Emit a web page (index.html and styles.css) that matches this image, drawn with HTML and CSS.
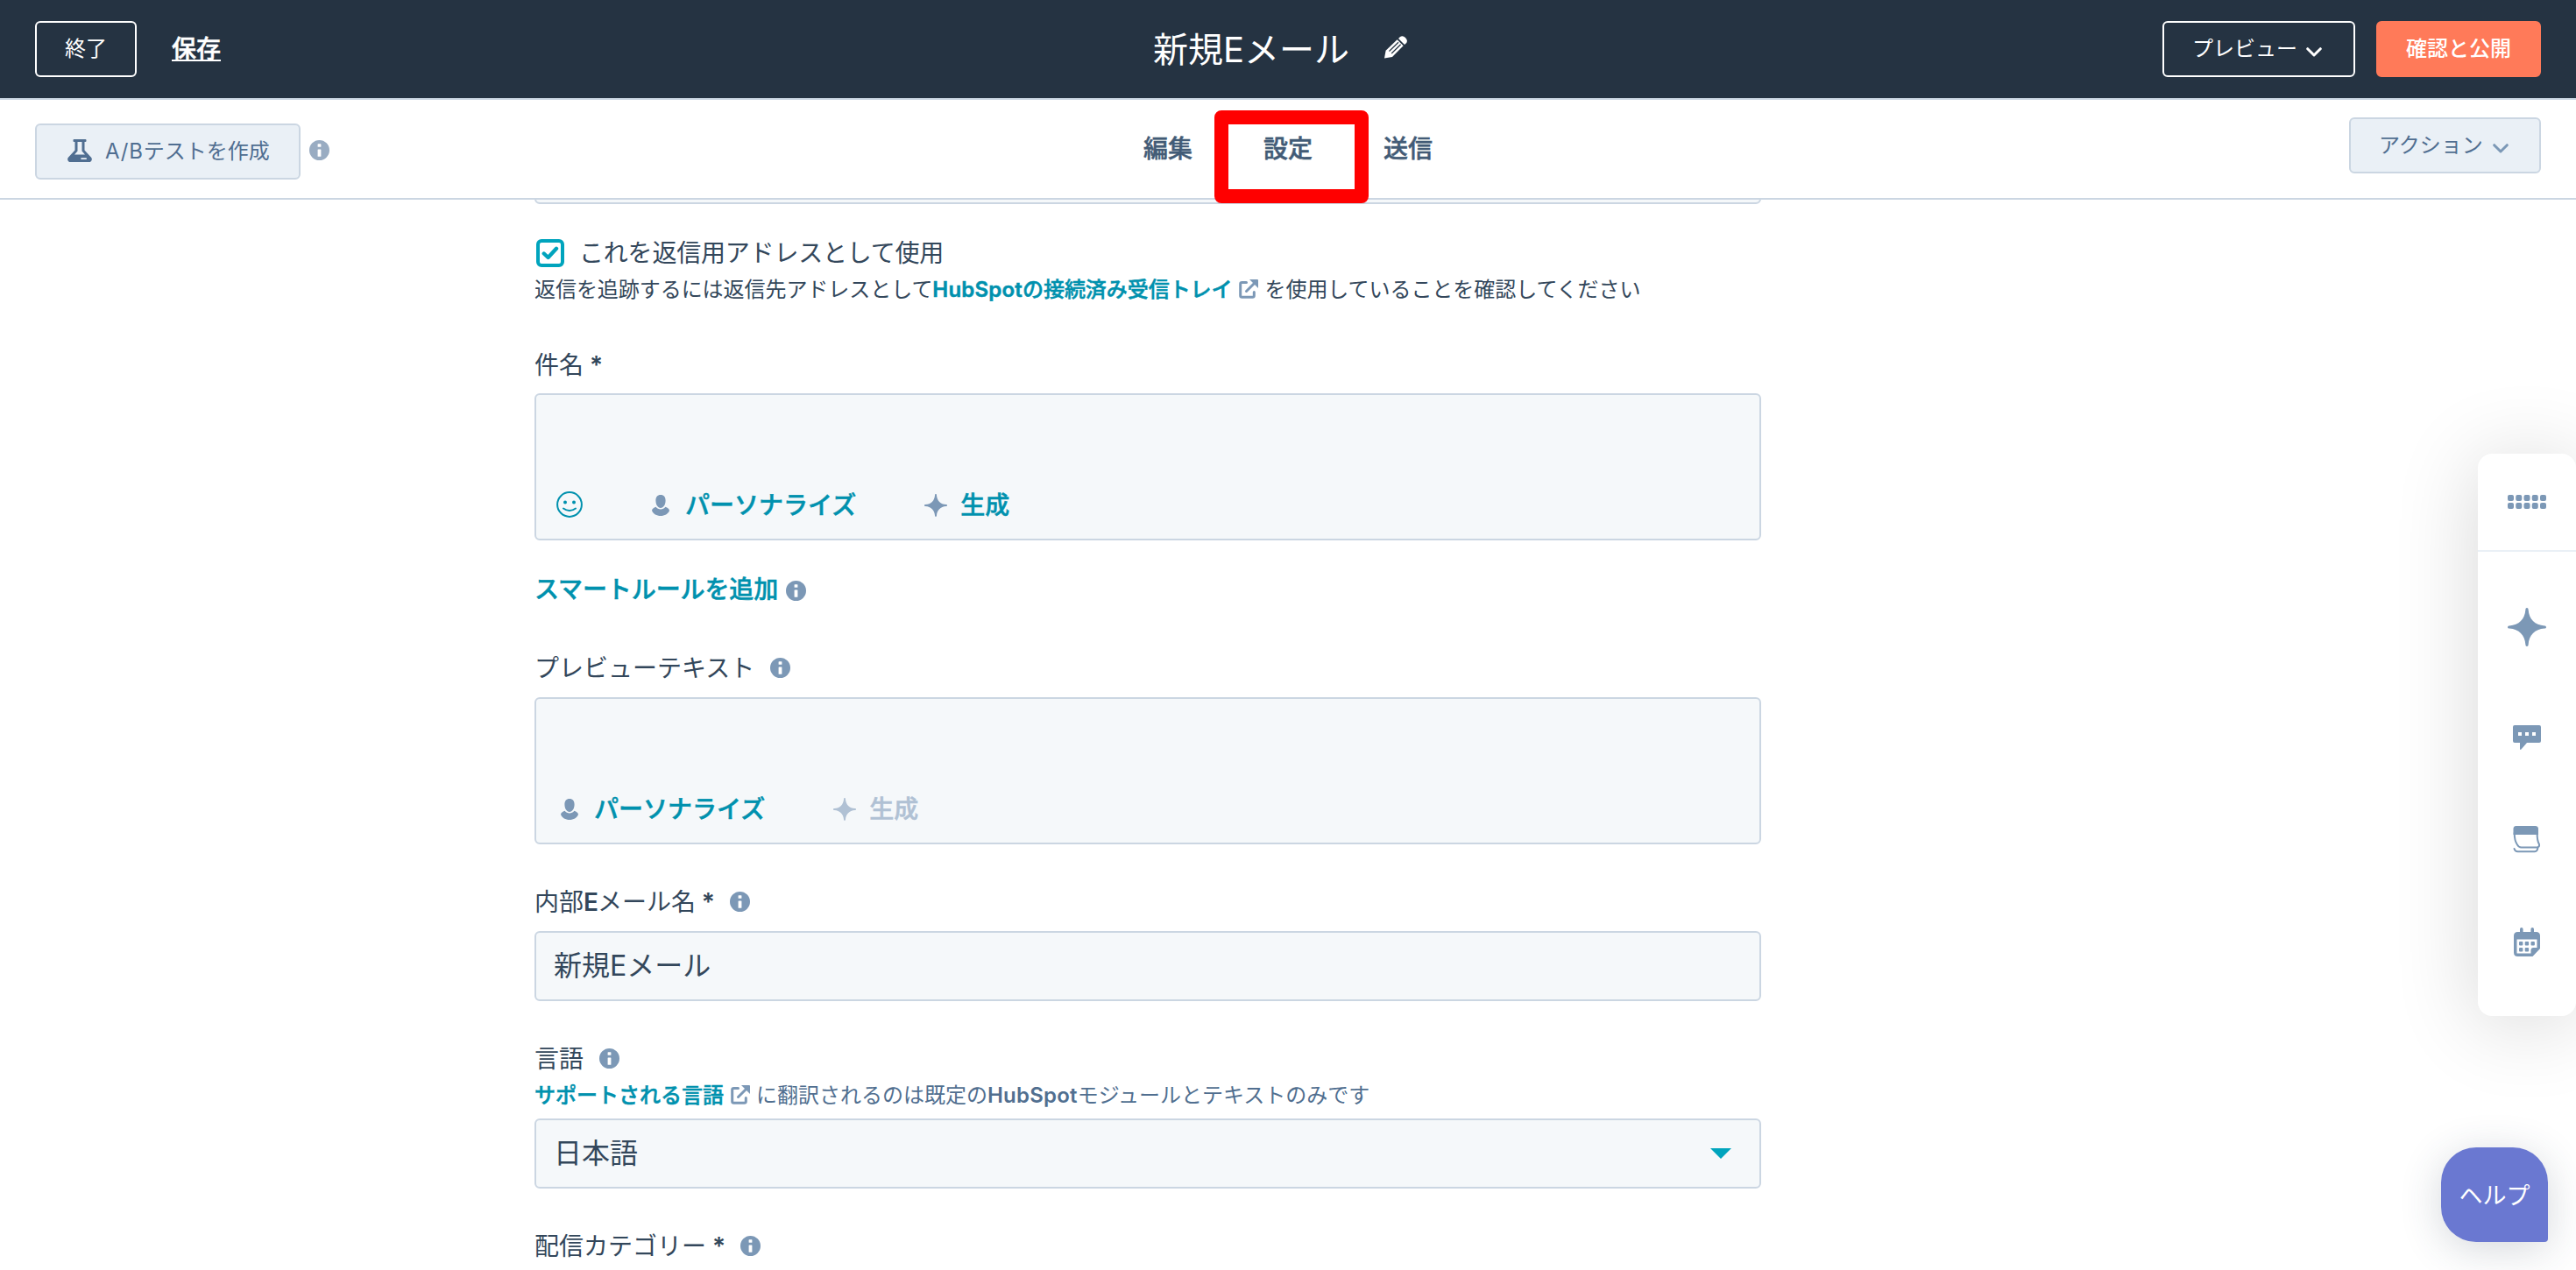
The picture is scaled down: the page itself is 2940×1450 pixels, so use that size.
FILE: index.html
```html
<!DOCTYPE html>
<html lang="ja">
<head>
    <meta charset="UTF-8">
    <title>新規Eメール</title>
    <link rel="stylesheet" href="styles.css">
</head>
<body>
<!-- icons -->
<svg class="sprite">
    <symbol id="info" viewBox="0 0 24 24">
        <path fill="currentColor" fill-rule="evenodd" d="M12 0a12 12 0 1 0 0 24a12 12 0 1 0 0-24zM10.600 4.400h2.800q.6 0 .6.600v2.600q0 .6-.6.600h-2.800q-.6 0-.6-.6V5q0-.6.600-.6zM10.600 11h2.800q.6 0 .6.600v7.400q0 .6-.6.600h-2.800q-.6 0-.6-.6v-7.400q0-.6.600-.6z"/>
    </symbol>
    <symbol id="external" viewBox="0 0 22 22">
        <path fill="none" stroke="currentColor" stroke-width="3" stroke-linecap="round" stroke-linejoin="round" d="M8.500 3.500H3.500Q1.700 3.500 1.700 5.300V18.500Q1.700 20.300 3.500 20.300H15.500Q17.300 20.300 17.300 18.500V14.500M8.500 13.500L17 5"/>
        <path fill="currentColor" d="M12 0h9q1 0 1 1v9l-3-3-4-4z"/>
    </symbol>
    <symbol id="person" viewBox="0 0 20 24">
        <path fill="currentColor" d="M10 0c3.600 0 5.800 2.600 5.600 6.800C15.400 11.500 13.200 15 10 15S4.600 11.500 4.400 6.800C4.200 2.600 6.400 0 10 0zM4.600 13.800C6 15.600 7.800 16.500 10 16.500s4-.9 5.400-2.700c2.600.8 4.400 2.200 4.600 4.200C18.600 21.800 14.500 24 10 24S1.400 21.800 0 18c.2-2 2-3.400 4.600-4.200z"/>
    </symbol>
    <symbol id="sparkle" viewBox="0 0 44 44">
        <path fill="currentColor" d="M22 0c1 0 1.600.8 1.600 2C24.400 13 31 19.600 42 20.400c1.200 0 2 .6 2 1.600s-.8 1.600-2 1.600C31 24.400 24.400 31 23.600 42c0 1.200-.6 2-1.600 2s-1.600-.8-1.600-2C19.600 31 13 24.400 2 23.600c-1.200 0-2-.6-2-1.600s.8-1.600 2-1.600C13 19.600 19.600 13 20.400 2c0-1.200.6-2 1.600-2z"/>
    </symbol>
    <symbol id="chevron" viewBox="0 0 18 11">
        <path fill="none" stroke="currentColor" stroke-width="3" stroke-linecap="round" stroke-linejoin="round" d="M1.700 1.700L9 9l7.300-7.300"/>
    </symbol>
</svg>

<header class="header">
    <div class="header-left">
        <a class="btn btn-outline" href="javascript:;">終了</a>
        <a class="save" href="javascript:;">保存</a>
    </div>
    <div class="title">
        <h1>新規Eメール</h1>
        <svg class="pencil" viewBox="0 0 26 26">
            <path fill="#fff" d="M0 25.500L1.600 16.800 14.600 4.200 21.600 11.200 9 24z"/>
            <path fill="#fff" d="M16 3l2-2q3-2 6 1t1.200 6l-2.200 2z"/>
            <path stroke="#253342" stroke-width="1.200" d="M5.500 17.500L16 7.200M8.200 20L18.600 9.800"/>
        </svg>
    </div>
    <div class="header-right">
        <a class="btn btn-outline preview" href="javascript:;">プレビュー<svg class="chevron"><use href="#chevron"/></svg></a>
        <a class="btn btn-primary" href="javascript:;">確認と公開</a>
    </div>
</header>

<nav class="subheader">
    <div class="sub-left">
        <a class="btn btn-light" href="javascript:;">
            <svg class="flask" viewBox="0 0 28 26">
                <path fill="currentColor" fill-rule="evenodd" d="M7.500 0h13q1 0 1 1v1q0 1-1 1h-1v9.500l7.800 8.500q1.600 3-1.300 5H2Q-.9 24 .7 21l7.800-8.500V3h-1q-1 0-1-1V1q0-1 1-1zM11.500 3v10.500L8 17.500h12l-3.500-4V3zM16 21.200q-.8 0-.8.900t.8.900h5.200q.8 0 .8-.9t-.8-.9z"/>
            </svg><span class="ab">A/B</span>テストを作成</a>
        <svg class="info info-pale"><use href="#info"/></svg>
    </div>
    <div class="tabs">
        <a href="javascript:;">編集</a>
        <a class="on" href="javascript:;">設定</a>
        <a href="javascript:;">送信</a>
    </div>
    <a class="btn btn-light action" href="javascript:;">アクション<svg class="chevron"><use href="#chevron"/></svg></a>
</nav>

<main class="main">
    <div class="form">
        <div class="field field-cut"></div>
        <div class="check">
            <span class="checkbox"><svg viewBox="0 0 20 16"><path fill="none" stroke="currentColor" stroke-width="4.400" stroke-linecap="round" stroke-linejoin="round" d="M2.800 8.500L7.600 13 17 2.800"/></svg></span>
            これを返信用アドレスとして使用
        </div>
        <p class="help help-reply">返信を追跡するには返信先アドレスとして<a href="javascript:;"><b>HubSpot</b>の接続済み受信トレイ</a><svg class="external"><use href="#external"/></svg>を使用していることを確認してください</p>

        <div class="label label-subject">件名 <b>*</b></div>
        <div class="field area">
            <svg class="smile" viewBox="0 0 30 30">
                <circle cx="15" cy="15" r="13.900" fill="none" stroke="currentColor" stroke-width="2"/>
                <circle cx="10" cy="12.500" r="2" fill="currentColor"/>
                <circle cx="20" cy="12.500" r="2" fill="currentColor"/>
                <path fill="none" stroke="currentColor" stroke-width="2" stroke-linecap="round" d="M8 19.500q7 5 14 0"/>
            </svg>
            <a class="tool" href="javascript:;"><svg class="person"><use href="#person"/></svg>パーソナライズ</a>
            <a class="tool" href="javascript:;"><svg class="spark"><use href="#sparkle"/></svg>生成</a>
        </div>
        <div class="smart"><a href="javascript:;">スマートルールを追加</a><svg class="info"><use href="#info"/></svg></div>

        <div class="label label-preview">プレビューテキスト<svg class="info"><use href="#info"/></svg></div>
        <div class="field area">
            <a class="tool" href="javascript:;"><svg class="person"><use href="#person"/></svg>パーソナライズ</a>
            <a class="tool disabled" href="javascript:;"><svg class="spark"><use href="#sparkle"/></svg>生成</a>
        </div>

        <div class="label">内部<b>E</b>メール名 <b>*</b><svg class="info"><use href="#info"/></svg></div>
        <div class="field">新規Eメール</div>

        <div class="label label-lang">言語<svg class="info"><use href="#info"/></svg></div>
        <p class="help help-lang"><a href="javascript:;">サポートされる言語</a><svg class="external"><use href="#external"/></svg>に翻訳されるのは既定の<b>HubSpot</b>モジュールとテキストのみです</p>
        <div class="field select">日本語<span class="caret"></span></div>

        <div class="label">配信カテゴリー <b>*</b><svg class="info"><use href="#info"/></svg></div>
    </div>
</main>

<aside class="side">
    <div class="side-top">
        <svg width="44" height="16" viewBox="0 0 44 16">
            <g fill="currentColor">
                <rect x="0" y="0" width="7" height="7" rx="2"/><rect x="9.250" y="0" width="7" height="7" rx="2"/><rect x="18.500" y="0" width="7" height="7" rx="2"/><rect x="27.750" y="0" width="7" height="7" rx="2"/><rect x="37" y="0" width="7" height="7" rx="2"/>
                <rect x="0" y="9" width="7" height="7" rx="2"/><rect x="9.250" y="9" width="7" height="7" rx="2"/><rect x="18.500" y="9" width="7" height="7" rx="2"/><rect x="27.750" y="9" width="7" height="7" rx="2"/><rect x="37" y="9" width="7" height="7" rx="2"/>
            </g>
        </svg>
    </div>
    <div class="side-list">
        <svg width="44" height="44"><use href="#sparkle"/></svg>
        <svg width="32" height="28" viewBox="0 0 32 28">
            <path fill="currentColor" fill-rule="evenodd" d="M2 0h28q2 0 2 2v16q0 2-2 2H16l-6.500 7.500q-1.500 1-1.500-.5v-7H2q-2 0-2-2V2q0-2 2-2zM6 8v4h4V8zM14 8v4h4V8zM22 8v4h4V8z"/>
        </svg>
        <svg width="32" height="31" viewBox="0 0 32 31">
            <path fill="currentColor" d="M3.500 0h22Q29 0 29 3.500V10H.5V3.500Q.5 0 3.500 0z"/>
            <path fill="none" stroke="currentColor" stroke-width="2" stroke-linejoin="round" stroke-linecap="round" d="M1.700 8c0 6 .8 10 3.300 13.500Q6.800 24.500 9.500 24.500H28Q30.500 24 30 21C28 17.500 27.500 14 27.700 8M1.500 26q1 3.200 4 3.200H25q3 0 3.500-4.500"/>
        </svg>
        <svg width="30" height="33" viewBox="0 0 30 33">
            <path fill="currentColor" fill-rule="evenodd" d="M7 5V2q0-2 1.800-2t1.800 2v3h8.800V2q0-2 1.800-2T23 2v3h2.500Q30 5 30 9.500V24l-8.500 9h-17Q0 33 0 28.500v-19Q0 5 4.500 5zM3.500 13.500V29.500H19.500V26q0-3 3-3h4v-9.500z"/>
            <g fill="currentColor">
                <rect x="6" y="16" width="4.400" height="4.400" rx="1"/><rect x="12.700" y="16" width="4.400" height="4.400" rx="1"/><rect x="19.500" y="16" width="4.400" height="4.400" rx="1"/>
                <rect x="6" y="23" width="4.400" height="4.400" rx="1"/><rect x="12.700" y="23" width="4.400" height="4.400" rx="1"/>
            </g>
        </svg>
    </div>
</aside>

<a class="help-btn" href="javascript:;">ヘルプ</a>
</body>
</html>
```
FILE: styles.css
```css
*{
    margin: 0;
    padding: 0;
    box-sizing: border-box;
}
body{
    height: 1450px;
    overflow: hidden;
    background: #fff;
    color: #33475b;
    font-family: Inter, "Noto Sans CJK JP", sans-serif;
    font-size: 28px;
    line-height: 40px;
}
a{
    color: #0091ae;
    text-decoration: none;
}
svg{
    flex: none;
}
.sprite{
    display: none;
}

/* header */
.header{
    height: 114px;
    padding: 24px 40px 0;
    display: grid;
    grid-template-columns: 1fr auto 1fr;
    align-items: start;
    background: #253342;
    border-bottom: 2px solid #cbd6e2;
}
.header-left,
.header-right{
    display: flex;
    align-items: center;
}
.header-right{
    justify-content: flex-end;
    gap: 24px;
}
.btn{
    height: 64px;
    padding: 0 32px;
    display: flex;
    align-items: center;
    border: 2px solid;
    border-radius: 6px;
    font-size: 24px;
    white-space: nowrap;
}
.btn-outline{
    color: #fff;
    border-color: #fff;
}
.preview{
    width: 220px;
}
.btn-primary{
    color: #fff;
    font-weight: 500;
    background: #ff7a59;
    border-color: #ff7a59;
}
.btn-light{
    color: #506e91;
    background: #eaf0f6;
    border-color: #cbd6e2;
}
.chevron{
    width: 18px;
    height: 11px;
    margin: 6px 0 0 11px;
}
.preview .chevron{
    margin-left: 10px;
}
.save{
    margin-left: 40px;
    color: #fff;
    font-weight: 500;
    -webkit-text-stroke: 0.5px;
    text-decoration: underline;
    text-decoration-thickness: 2px;
    text-underline-offset: 2px;
}
.title{
    height: 64px;
    padding: 1px 18px 0 0;
    display: flex;
    align-items: center;
    color: #fff;
}
.title h1{
    font-size: 40px;
    font-weight: 400;
}
.pencil{
    width: 26px;
    height: 26px;
    margin: -6px 0 0 40px;
}

/* sub header */
.subheader{
    height: 114px;
    padding: 0 40px;
    display: grid;
    grid-template-columns: 1fr auto 1fr;
    border-bottom: 2px solid #cbd6e2;
}
.sub-left{
    padding-top: 27px;
    display: flex;
    align-items: flex-start;
}
.sub-left .btn{
    width: 303px;
    padding-left: 35px;
}
.ab{
    letter-spacing: 0.8px;
}
.flask{
    width: 28px;
    height: 26px;
    margin: -3px 15px 0 0;
}
.info{
    width: 23px;
    height: 23px;
    color: #7c98b6;
}
.info-pale{
    margin: 19px 0 0 10px;
    color: #99acc2;
}
.tabs{
    padding-top: 36px;
    display: flex;
    gap: 81px;
}
.tabs a{
    color: #425b76;
    font-weight: 500;
    -webkit-text-stroke: 0.5px;
    position: relative;
}
.tabs .on::after{
    content: "";
    position: absolute;
    left: -56px;
    top: -24px;
    width: 176px;
    height: 106px;
    box-sizing: border-box;
    border: 16px solid #f00;
    border-radius: 8px;
    z-index: 5;
}
.action{
    width: 219px;
    margin-top: 20px;
    justify-self: end;
}
.action .chevron{
    color: #7c98b6;
}

/* form */
.main{
    height: 1222px;
    overflow: hidden;
}
.form{
    width: 1400px;
    margin-left: 610px;
}
.field{
    height: 80px;
    padding: 0 20px;
    display: flex;
    align-items: center;
    background: #f5f8fa;
    border: 2px solid #cbd6e2;
    border-radius: 6px;
    font-size: 32px;
}
.field-cut{
    margin-top: -75px;
}
.check{
    height: 32px;
    margin: 40px 0 10px 2px;
    display: flex;
    align-items: center;
    letter-spacing: -0.2px;
}
.checkbox{
    width: 32px;
    height: 32px;
    margin-right: 17px;
    display: flex;
    align-items: center;
    justify-content: center;
    color: #00a4bd;
    border: 4px solid #00a4bd;
    border-radius: 6px;
}
.checkbox svg{
    width: 20px;
    height: 16px;
}
.help{
    height: 32px;
    font-size: 24px;
    line-height: 32px;
    white-space: nowrap;
}
.help a{
    font-weight: 500;
    -webkit-text-stroke: 0.5px;
}
.help b{
    font-weight: 600;
    letter-spacing: 0.2px;
}
.help-reply{
    letter-spacing: -0.05px;
}
.external{
    width: 22px;
    height: 22px;
    margin: 0 7px 0 8px;
    color: #7c98b6;
    vertical-align: -2px;
}
.label{
    height: 40px;
    margin: 46px 0 13px;
    display: flex;
    align-items: center;
    white-space: pre;
}
.label b{
    font-weight: 600;
    letter-spacing: -1px;
}
.label b:nth-last-of-type(1){
    margin-left: -1px;
}
.label .info{
    margin: -2px 0 0 18px;
}
.label-subject{
    margin: 50px 0 12px;
}
.label-preview{
    margin-top: 50px;
}
.label-lang{
    margin-bottom: 6px;
}
.help-lang{
    margin-bottom: 10px;
    color: #516f90;
}
.area{
    height: 168px;
    padding: 0 23px 24px;
    align-items: flex-end;
    font-size: 28px;
}
.smile{
    width: 30px;
    height: 30px;
    color: #0091ae;
}
.tool{
    height: 30px;
    padding-top: 1px;
    display: flex;
    align-items: center;
    font-weight: 500;
    -webkit-text-stroke: 0.5px;
}
.smile + .tool{
    margin-left: 79px;
}
.tool + .tool{
    margin-left: 78px;
}
.person{
    width: 20px;
    height: 24px;
    margin: 0 18px 0 0;
    color: #7c98b6;
}
.area > .tool:first-child{
    margin-left: 5px;
}
.spark{
    width: 26px;
    height: 26px;
    margin: 0 15px 0 0;
    color: #7c98b6;
}
.disabled,
.disabled .spark{
    color: #b0c1d4;
}
.smart{
    margin-top: 36px;
    display: flex;
    align-items: center;
    letter-spacing: -0.1px;
}
.smart .info{
    margin: 3px 0 0 9px;
}
.smart a{
    font-weight: 500;
    -webkit-text-stroke: 0.5px;
}
.select{
    justify-content: space-between;
}
.caret{
    margin-right: 12px;
    border: 12px solid transparent;
    border-top-color: #00a4bd;
    border-bottom: 0;
}

/* floating toolbar */
.side{
    position: absolute;
    right: 0;
    top: 518px;
    width: 112px;
    height: 642px;
    color: #7c98b6;
    background: #fff;
    border-radius: 16px;
    box-shadow: 0 8px 96px rgba(0,0,0,0.16);
}
.side-top{
    height: 112px;
    padding: 47px 0 0 34px;
    line-height: 0;
    border-bottom: 2px solid #eaf0f6;
}
.side-list{
    padding-top: 64px;
    display: flex;
    flex-direction: column;
    align-items: center;
}
.side-list svg + svg{
    margin-top: 90px;
}
.side-list svg:nth-child(3){
    margin-top: 87px;
}
.side-list svg:nth-child(4){
    margin-top: 85px;
}

.help-btn{
    position: absolute;
    right: 32px;
    top: 1310px;
    width: 122px;
    height: 108px;
    color: #fff;
    font-size: 27px;
    line-height: 112px;
    text-align: center;
    background: #6a78d1;
    border-radius: 40px 40px 4px 40px;
    box-shadow: 0 8px 48px rgba(45,62,80,0.2);
}
```
